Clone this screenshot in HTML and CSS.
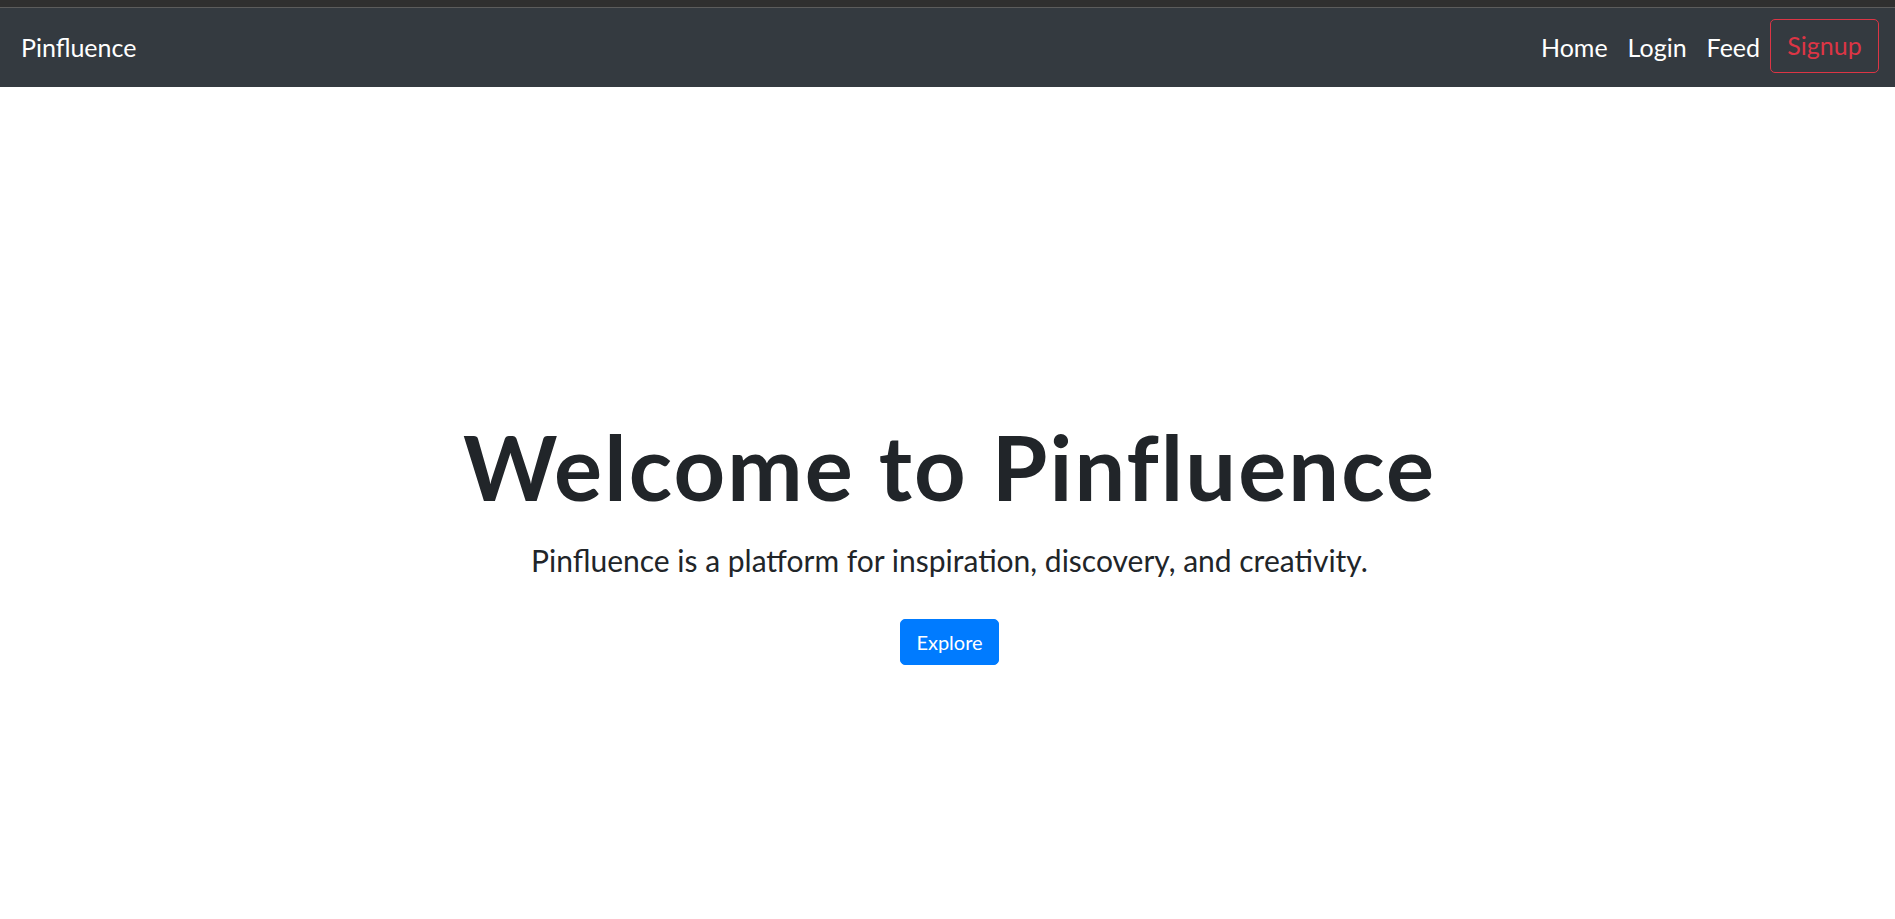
FILE: index.html
```html
<!DOCTYPE html>
<html lang="en">
<head>
<meta charset="utf-8">
<title>Pinfluence</title>
<link rel="stylesheet" href="styles.css">
</head>
<body>
<div class="chrome"></div>
<nav class="navbar">
  <a class="brand" href="#">Pinfluence</a>
  <ul class="nav">
    <li><a class="nav-link" href="#">Home</a></li>
    <li><a class="nav-link" href="#">Login</a></li>
    <li><a class="nav-link" href="#">Feed</a></li>
    <li><a class="btn-signup" href="#">Signup</a></li>
  </ul>
</nav>
<main class="hero">
  <h1 class="title">Welcome to Pinfluence</h1>
  <p class="lead">Pinfluence is a platform for inspiration, discovery, and creativity.</p>
  <a class="btn-explore" href="#">Explore</a>
</main>
</body>
</html>
```
FILE: styles.css
```css
* { box-sizing: border-box; }
html, body { margin: 0; padding: 0; }
body {
  font-family: "Lato", "Open Sans", sans-serif;
  color: #212529;
  background: #fff;
  height: 919px;
  overflow: hidden;
}
.chrome {
  height: 8px;
  background: #2f2f2f;
  border-bottom: 1px solid #5c5c5c;
}
.navbar {
  background: #343a40;
  display: flex;
  align-items: center;
  justify-content: space-between;
  padding: 11px 16px 14px 21px;
}
.brand {
  color: #fff;
  text-decoration: none;
  font-size: 25px;
  line-height: 37.5px;
  padding-top: 3px;
}
.nav {
  list-style: none;
  margin: 0;
  padding: 0;
  display: flex;
  align-items: center;
}
.nav li { display: flex; }
.nav-link {
  color: #fff;
  text-decoration: none;
  font-size: 25px;
  line-height: 37.5px;
  padding: 3px 10px 0;
}
.btn-signup {
  display: inline-block;
  color: #dc3545;
  border: 1px solid #dc3545;
  border-radius: 5px;
  font-size: 25px;
  line-height: 37.5px;
  text-decoration: none;
  padding: 7.25px 16.3px;
}
.hero {
  padding: 325px 0 0 4px;
  text-align: center;
}
.title {
  font-size: 90px;
  font-weight: 700;
  line-height: 1.2;
  letter-spacing: 2.1px;
  margin: 0 0 18px;
}
.lead {
  font-size: 30px;
  line-height: 1.5;
  margin: 0 0 36px;
}
.btn-explore {
  display: inline-block;
  background: #007bff;
  border: 1px solid #007bff;
  color: #fff;
  text-decoration: none;
  font-size: 20px;
  line-height: 30px;
  border-radius: 5px;
  padding: 7px 15.5px;
}
```
